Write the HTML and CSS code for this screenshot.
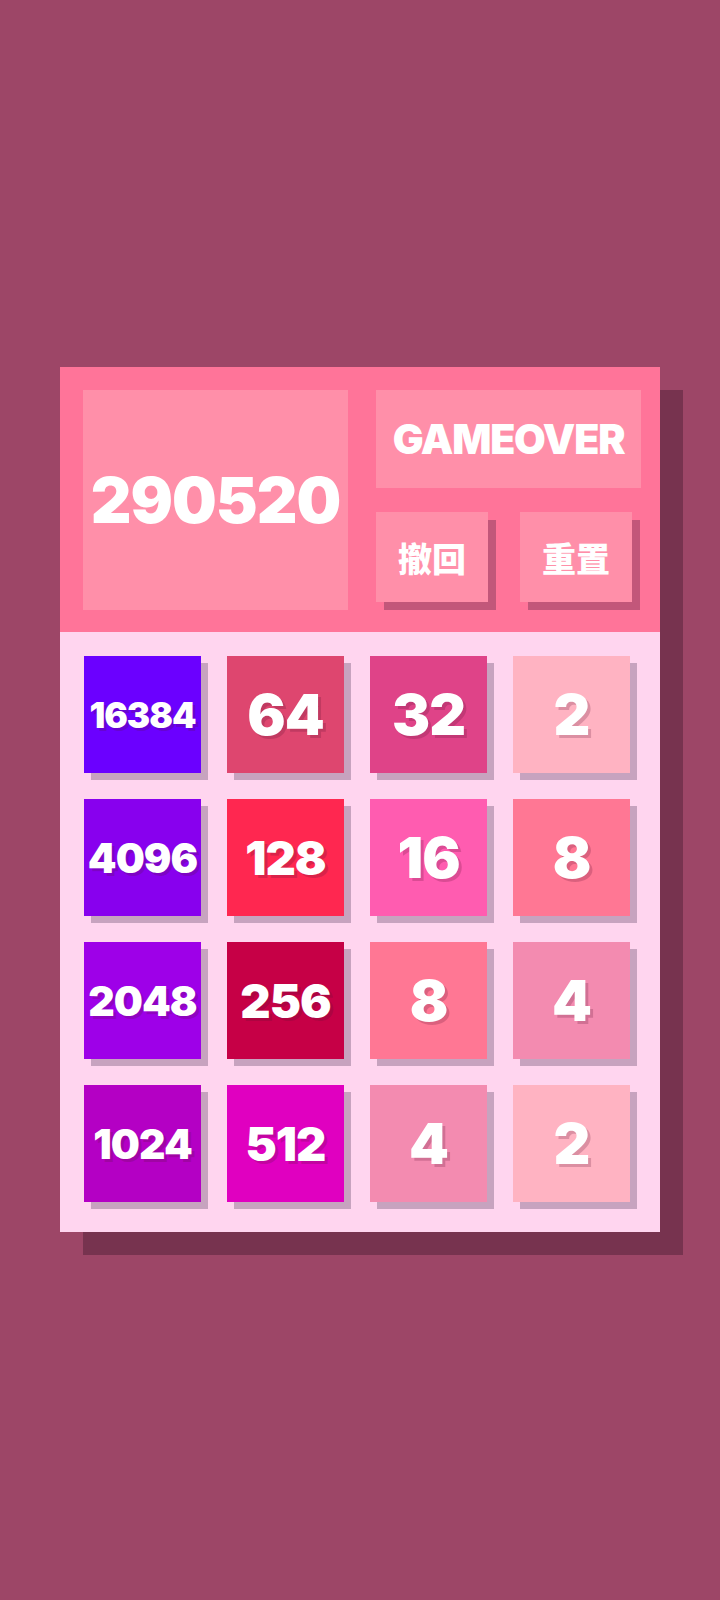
FILE: index.html
```html
<!DOCTYPE html>
<html lang="zh">
<head>
    <meta charset="UTF-8">
    <meta name="viewport" content="width=device-width, initial-scale=1.0">
    <title>2048</title>
    <link rel="stylesheet" href="styles.css">
</head>
<body>
    <div class="stage">
        <div class="board">
            <!-- score and controls -->
            <div class="top">
                <div class="score">290520</div>
                <div class="controls">
                    <div class="status">GAMEOVER</div>
                    <div class="buttons">
                        <div class="btn">撤回</div>
                        <div class="btn">重置</div>
                    </div>
                </div>
            </div>
            <!-- 4x4 grid -->
            <div class="grid">
                <div class="tile t16384 d5">16384</div>
                <div class="tile t64 d2">64</div>
                <div class="tile t32 d2">32</div>
                <div class="tile t2 d1">2</div>

                <div class="tile t4096 d4">4096</div>
                <div class="tile t128 d3">128</div>
                <div class="tile t16 d2">16</div>
                <div class="tile t8 d1">8</div>

                <div class="tile t2048 d4">2048</div>
                <div class="tile t256 d3">256</div>
                <div class="tile t8 d1">8</div>
                <div class="tile t4 d1">4</div>

                <div class="tile t1024 d4">1024</div>
                <div class="tile t512 d3">512</div>
                <div class="tile t4 d1">4</div>
                <div class="tile t2 d1">2</div>
            </div>
        </div>
    </div>
</body>
</html>
```

FILE: styles.css
```css
body {
    margin: 0;
    background-color: #9d4667;
    font-family: Inter, "Noto Sans CJK SC", sans-serif;
    color: #fff;
}
.stage { padding: 367px 0 0 60px; height: 1233px; }
.board { width: 600px; box-shadow: 23px 23px 0 #77334f; }

.top {
    display: flex;
    gap: 28px;
    height: 220px;
    padding: 23px 19px 22px 23px;
    background-color: #ff7499;
}
.score {
    width: 265px;
    display: flex;
    align-items: center;
    justify-content: center;
    background-color: #ff8fa9;
    font-size: 63px;
    font-weight: 900;
    letter-spacing: -1px;
}
.controls { width: 265px; display: flex; flex-direction: column; }
.status {
    height: 98px;
    display: flex;
    align-items: center;
    justify-content: center;
    background-color: #ff8fa9;
    font-size: 41px;
    font-weight: 900;
    letter-spacing: -1.2px;
}
.buttons { display: flex; gap: 32px; margin-top: 24px; }
.btn {
    width: 112px;
    height: 90px;
    display: flex;
    align-items: center;
    justify-content: center;
    background-color: #ff8fa9;
    box-shadow: 8px 8px 0 #c2577a;
    font-family: "Noto Sans CJK SC", sans-serif;
    font-size: 34px;
    font-weight: 900;
}

.grid {
    height: 576px;
    padding: 24px 0 0 24px;
    display: grid;
    grid-template-columns: repeat(4, 117px);
    grid-auto-rows: 117px;
    gap: 26px;
    background-color: #ffd5ef;
}
.tile {
    display: flex;
    align-items: center;
    justify-content: center;
    box-shadow: 7px 7px 0 #c7a3bf;
    font-weight: 900;
    letter-spacing: -1px;
    text-shadow: 3px 3px 0 rgba(90, 20, 50, 0.22);
}
.d1, .d2 { font-size: 57px; }
.d3 { font-size: 47px; }
.d4 { font-size: 41px; }
.d5 { font-size: 35px; }

.t2 { background-color: #ffb3c2; }
.t4 { background-color: #f38bb0; }
.t8 { background-color: #ff7794; }
.t16 { background-color: #ff5cb0; }
.t32 { background-color: #df4388; }
.t64 { background-color: #de466f; }
.t128 { background-color: #ff2750; }
.t256 { background-color: #c60046; }
.t512 { background-color: #e000c0; }
.t1024 { background-color: #b400c4; }
.t2048 { background-color: #9e00e8; }
.t4096 { background-color: #8800ee; }
.t16384 { background-color: #6b00ff; }
```
